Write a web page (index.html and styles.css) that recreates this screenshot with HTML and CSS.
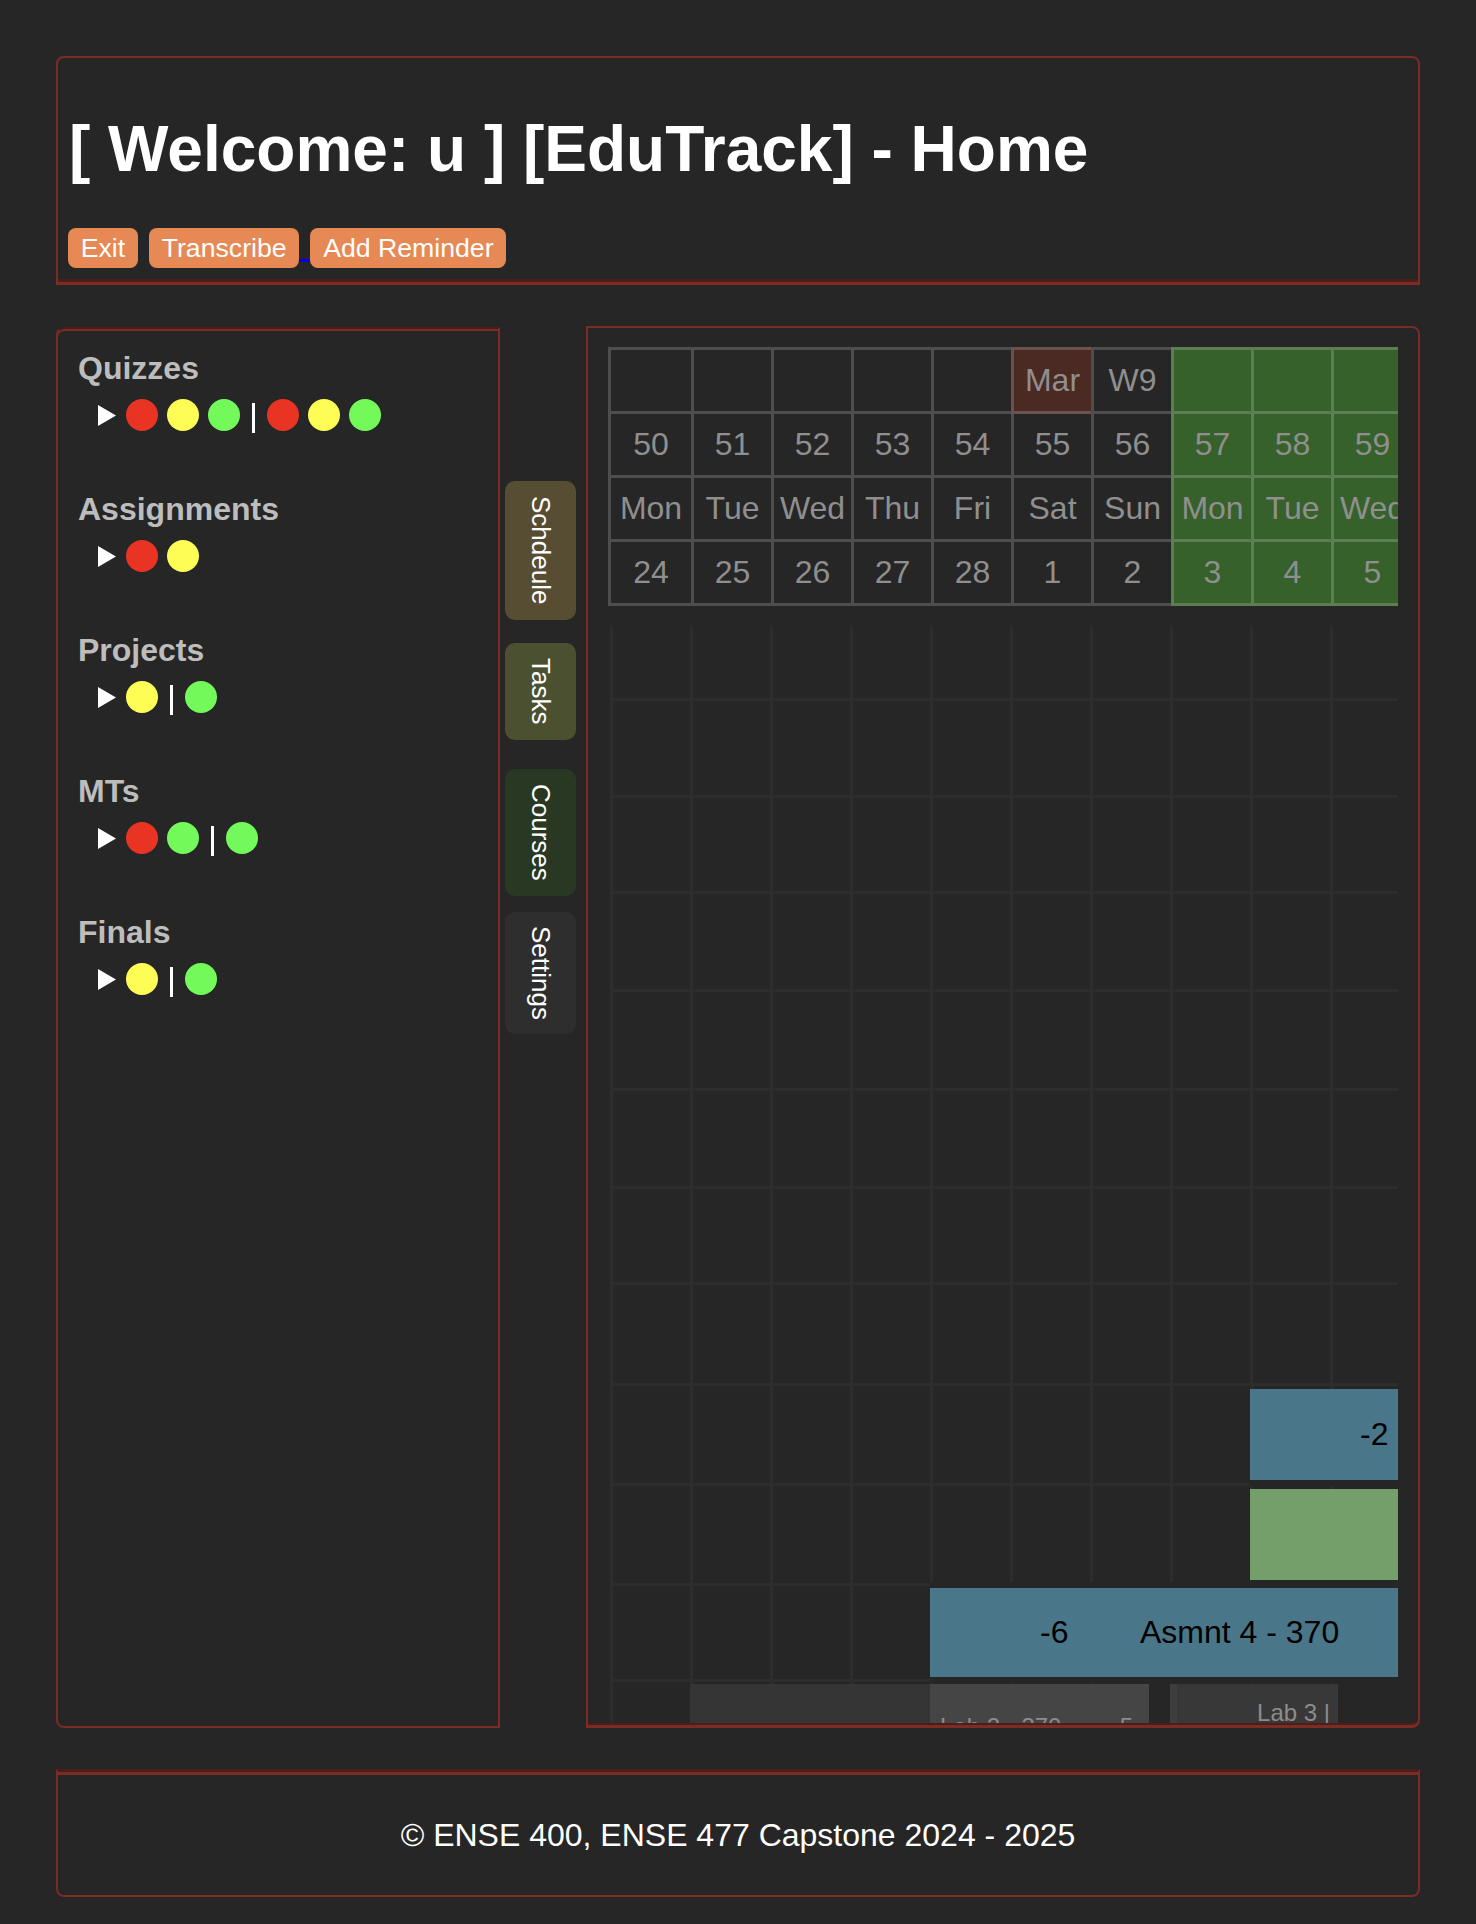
FILE: index.html
```html
<!DOCTYPE html>
<html lang="en">
<head>
<meta charset="utf-8">
<title>EduTrack - Home</title>
<link rel="stylesheet" href="styles.css">
</head>
<body>
<header class="top">
  <h1 class="title">[ Welcome: u ] [EduTrack] - Home</h1>
  <div class="actions">
    <button class="btn">Exit</button>
    <span class="sp"></span>
    <button class="btn">Transcribe</button>
    <span class="link-gap"></span>
    <button class="btn">Add Reminder</button>
  </div>
</header>

<main class="main">
  <aside class="side">
    <section class="grp">
      <div class="grp-title">Quizzes</div>
      <div class="grp-row">
        <svg class="tri" width="18" height="21" viewBox="0 0 18 21"><polygon points="0,0 18,10.5 0,21" fill="#fff"/></svg>
        <span class="dot red"></span><span class="dot yel"></span><span class="dot grn"></span>
        <span class="bar"></span>
        <span class="dot red"></span><span class="dot yel"></span><span class="dot grn"></span>
      </div>
    </section>
    <section class="grp">
      <div class="grp-title">Assignments</div>
      <div class="grp-row">
        <svg class="tri" width="18" height="21" viewBox="0 0 18 21"><polygon points="0,0 18,10.5 0,21" fill="#fff"/></svg>
        <span class="dot red"></span><span class="dot yel"></span>
      </div>
    </section>
    <section class="grp">
      <div class="grp-title">Projects</div>
      <div class="grp-row">
        <svg class="tri" width="18" height="21" viewBox="0 0 18 21"><polygon points="0,0 18,10.5 0,21" fill="#fff"/></svg>
        <span class="dot yel"></span>
        <span class="bar"></span>
        <span class="dot grn"></span>
      </div>
    </section>
    <section class="grp">
      <div class="grp-title">MTs</div>
      <div class="grp-row">
        <svg class="tri" width="18" height="21" viewBox="0 0 18 21"><polygon points="0,0 18,10.5 0,21" fill="#fff"/></svg>
        <span class="dot red"></span><span class="dot grn"></span>
        <span class="bar"></span>
        <span class="dot grn"></span>
      </div>
    </section>
    <section class="grp">
      <div class="grp-title">Finals</div>
      <div class="grp-row">
        <svg class="tri" width="18" height="21" viewBox="0 0 18 21"><polygon points="0,0 18,10.5 0,21" fill="#fff"/></svg>
        <span class="dot yel"></span>
        <span class="bar"></span>
        <span class="dot grn"></span>
      </div>
    </section>
  </aside>

  <nav class="tabs">
    <div class="tab t-sch"><span>Schdeule</span></div>
    <div class="tab t-task"><span>Tasks</span></div>
    <div class="tab t-crs"><span>Courses</span></div>
    <div class="tab t-set"><span>Settings</span></div>
  </nav>

  <section class="cal">
    <div class="cal-inner">
      <div class="tl-head">
        <div class="c"></div><div class="c"></div><div class="c"></div><div class="c"></div><div class="c"></div><div class="c mar">Mar</div><div class="c">W9</div><div class="c g"></div><div class="c g"></div><div class="c g"></div><div class="c g"></div>
        <div class="c">50</div><div class="c">51</div><div class="c">52</div><div class="c">53</div><div class="c">54</div><div class="c">55</div><div class="c">56</div><div class="c g">57</div><div class="c g">58</div><div class="c g">59</div><div class="c g"></div>
        <div class="c">Mon</div><div class="c">Tue</div><div class="c">Wed</div><div class="c">Thu</div><div class="c">Fri</div><div class="c">Sat</div><div class="c">Sun</div><div class="c g">Mon</div><div class="c g">Tue</div><div class="c g">Wed</div><div class="c g"></div>
        <div class="c">24</div><div class="c">25</div><div class="c">26</div><div class="c">27</div><div class="c">28</div><div class="c">1</div><div class="c">2</div><div class="c g">3</div><div class="c g">4</div><div class="c g">5</div><div class="c g"></div>
      </div>

      <div class="tl-body">
        <div class="row"></div>
        <div class="row"></div>
        <div class="row"></div>
        <div class="row"></div>
        <div class="row"></div>
        <div class="row"></div>
        <div class="row"></div>
        <div class="row"></div>
        <div class="row">
          <div class="ev ev-blue hide-below" style="grid-column: 9 / span 3"><span class="ev-n">-2</span></div>
        </div>
        <div class="row">
          <div class="ev ev-green hide-below" style="grid-column: 9 / span 3"></div>
        </div>
        <div class="row">
          <div class="ev ev-blue hide-both" style="grid-column: 5 / span 7"><span class="ev-n">-6</span><span class="ev-t">Asmnt 4 - 370</span></div>
        </div>
        <div class="row last">
          <div class="lab lab-a" style="grid-column: 2 / span 3"></div>
          <div class="lab lab-b" style="grid-column: 5 / span 3"><span>Lab 2 - 370</span><span>5</span></div>
          <div class="lab lab-c" style="grid-column: 8 / span 3"><span>Lab 3 |</span></div>
        </div>
      </div>
    </div>
  </section>
</main>

<footer class="foot">© ENSE 400, ENSE 477 Capstone 2024 - 2025</footer>
</body>
</html>
```

FILE: styles.css
```css
* { box-sizing: border-box; }

html, body {
  margin: 0;
  background: #262626;
}

body {
  font-family: "Liberation Sans", Arial, Helvetica, sans-serif;
  color: #fff;
  padding: 56px 56px 27px;
}

/* ---------- header ---------- */
.top {
  height: 229px;
  border: 2px solid #7c2b25;
  border-bottom-width: 3px;
  border-radius: 8px 8px 0 0;
  box-shadow: inset 0 -3px 0 #4b1e1b;
  padding: 8px 8px 11px;
}

.title {
  font-size: 64px;
  line-height: 74px;
  font-weight: bold;
  margin: 46px 0 42px 3px;
  white-space: nowrap;
}

.actions {
  display: flex;
  align-items: flex-start;
  margin-left: 2px;
}

.btn {
  height: 40px;
  padding: 0 12.75px;
  border: none;
  border-radius: 8px;
  background: #e78955;
  color: #fff;
  font-family: "Liberation Sans", Arial, sans-serif;
  font-size: 26.67px;
  line-height: 40px;
}

.sp { width: 11px; }

.link-gap {
  width: 11px;
  height: 3px;
  margin-top: 31px;
  background: #0000ee;
}

/* ---------- main ---------- */
.main {
  display: flex;
  height: 1401px;
  margin-top: 42px;
}

.side {
  width: 444px;
  flex: none;
  border: 2px solid #7c2b25;
  border-top-color: #4b1e1b;
  border-radius: 8px 0 0 8px;
  box-shadow: inset 0 2px 0 #7c2b25;
  padding: 21px 20px;
}

.grp { margin-bottom: 60px; }

.grp-title {
  font-size: 32px;
  line-height: 37px;
  font-weight: bold;
  color: #bdbdbd;
}

.grp-row {
  display: flex;
  align-items: center;
  gap: 9px;
  height: 32px;
  margin-top: 12px;
  margin-left: 20px;
}

.tri { flex: none; margin-right: 1px; }

.dot {
  width: 32px;
  height: 32px;
  border-radius: 50%;
  flex: none;
}
.red { background: #e93424; }
.yel { background: #fefd55; }
.grn { background: #73fa5a; }

.bar {
  width: 3px;
  height: 30px;
  background: #fff;
  margin: 6px 3px 0;
  flex: none;
}

/* ---------- tabs ---------- */
.tabs {
  width: 71px;
  flex: none;
  margin-left: 5px;
  padding-top: 154px;
  display: flex;
  flex-direction: column;
}

.tab {
  display: flex;
  align-items: center;
  justify-content: center;
  width: 71px;
  border-radius: 10px;
  color: #fff;
  font-size: 26px;
}
.tab span { writing-mode: vertical-rl; white-space: nowrap; }

.t-sch  { height: 139px; background: #574d33; }
.t-task { height: 97px;  background: #4b5130; margin-top: 23px; }
.t-crs  { height: 127px; background: #283822; margin-top: 29px; }
.t-set  { height: 122px; background: #2e2e2e; margin-top: 16px; }

/* ---------- calendar ---------- */
.cal {
  flex: 1;
  margin-left: 10px;
  margin-top: -1px;
  border: 2px solid #7c2b25;
  border-bottom-width: 3px;
  border-radius: 0 8px 8px 0;
  box-shadow: inset 0 -2px 0 #4b1e1b;
  padding: 19px 20px 2px;
  min-width: 0;
}

.cal-inner {
  height: 100%;
  overflow: hidden;
}

.tl-head {
  display: grid;
  grid-template-columns: 83px repeat(10, 80px);
  grid-template-rows: 67px 64px 64px 64px;
  width: max-content;
}

.c {
  display: flex;
  align-items: center;
  justify-content: center;
  border-left: 3px solid rgba(255, 255, 255, 0.19);
  border-bottom: 3px solid rgba(255, 255, 255, 0.19);
  color: #8f8f8f;
  font-size: 32px;
  white-space: nowrap;
  overflow: hidden;
}
.tl-head > .c:nth-child(-n+11) { border-top: 3px solid rgba(255, 255, 255, 0.19); }

.c.g { background: #36612a; }
.c.mar { background: #4b2a23; }

.tl-body {
  margin-top: 21px;
  margin-left: 2px;
  width: 960px;
  background-image: linear-gradient(to right, #2d2d2d 3px, transparent 3px);
  background-size: 80px 100%;
}

.row {
  display: grid;
  grid-template-columns: repeat(12, 80px);
  align-items: center;
  height: 98px;
  border-bottom: 3px solid #2d2d2d;
}
.row:nth-child(1)  { height: 74px; }
.row:nth-child(2)  { height: 97px; }
.row:nth-child(3)  { height: 96px; }
.row:nth-child(4)  { height: 98px; }
.row:nth-child(5)  { height: 99px; }
.row:nth-child(6)  { height: 98px; }
.row:nth-child(7)  { height: 96px; }
.row:nth-child(8)  { height: 101px; }
.row:nth-child(9)  { height: 100px; }
.row:nth-child(10) { height: 100px; }
.row:nth-child(11) { height: 96px; }
.row.last { height: 90px; border-bottom: none; align-items: stretch; }

.ev {
  height: 91px;
  display: flex;
  align-items: center;
  padding-left: 110px;
  color: #000;
  font-size: 32px;
  white-space: nowrap;
  overflow: hidden;
}
.ev-blue { background: #4a768a; }
.ev-green { background: #749e6a; }
.hide-below { box-shadow: 0 6px 0 #262626; }
.hide-both { height: 89px; box-shadow: 0 6px 0 #262626, 0 -6px 0 #262626; }

.ev-n { width: 100px; flex: none; }

.lab {
  margin-top: 2px;
  color: #8c8c8c;
  font-size: 24px;
  white-space: nowrap;
  overflow: hidden;
}
.lab-a { background: #353535; }
.lab-b {
  background: #454545;
  margin-right: 21px;
  padding: 29px 16px 0 10px;
  display: flex;
  justify-content: space-between;
}
.lab-c {
  background: #383838;
  border-left: 7px solid #3e3e3e;
  margin-right: 72px;
  padding: 15px 8px 0 0;
  text-align: right;
}

/* ---------- footer ---------- */
.foot {
  height: 128px;
  margin-top: 41px;
  border: 2px solid #7c2b25;
  border-top: 3px solid #4b1e1b;
  border-radius: 0 0 8px 8px;
  box-shadow: inset 0 3px 0 #7c2b25;
  padding-top: 3px;
  display: flex;
  align-items: center;
  justify-content: center;
  font-size: 32px;
}
```
